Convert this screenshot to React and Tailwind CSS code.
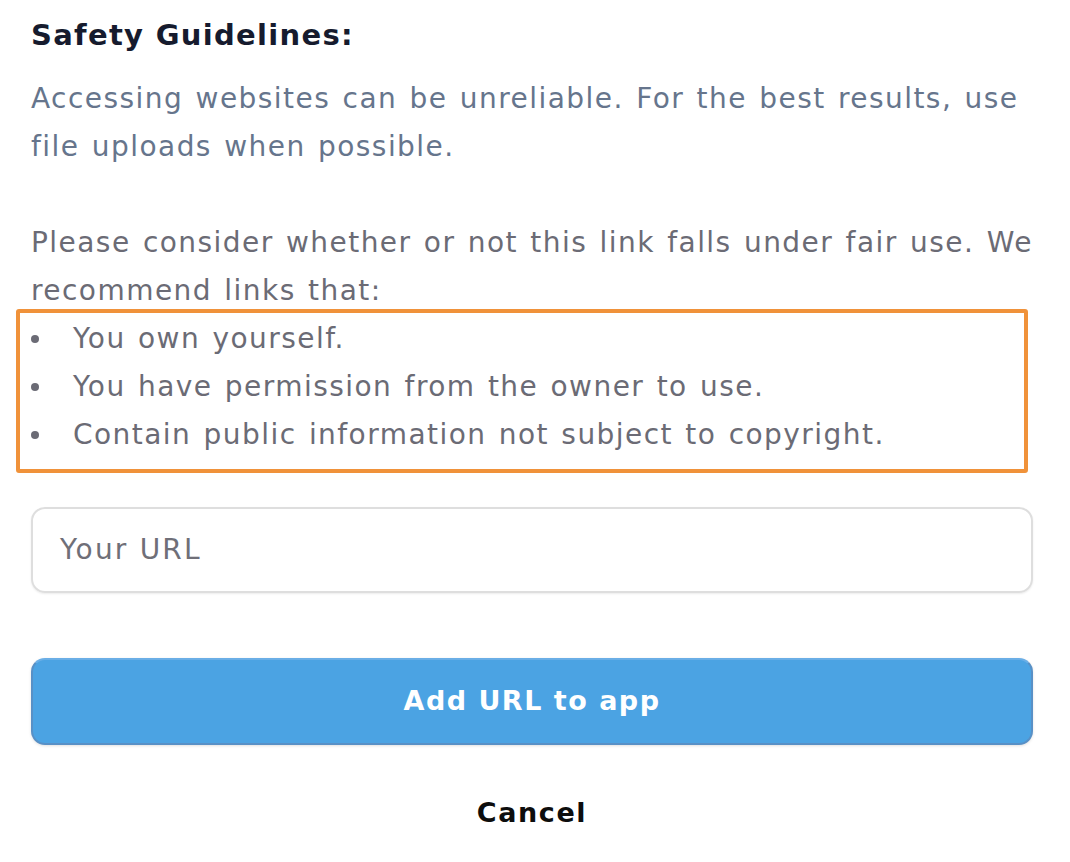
export default function App() {
  const font = { fontFamily: '"DejaVu Sans", "Open Sans", sans-serif' };
  const items = [
    "You own yourself.",
    "You have permission from the owner to use.",
    "Contain public information not subject to copyright.",
  ];
  return (
    <div className="w-[1070px] h-[862px] bg-white overflow-hidden" style={font}>
      <div className="w-[1002px] ml-[31px] pt-[11px]">
        <h2 className="text-[29px] leading-[48px] font-semibold tracking-[1.3px] text-[#161b2e]">Safety Guidelines:</h2>
        <div className="text-[28px] leading-[48px] tracking-[1.45px] [word-spacing:2px]">
          <p className="mt-[16px] text-[#66758c] whitespace-nowrap">
            Accessing websites can be unreliable. For the best results, use
            <br />
            file uploads when possible.
          </p>
          <p className="mt-[48px] text-[#6b6b75] whitespace-nowrap">
            Please consider whether or not this link falls under fair use. We
            <br />
            recommend links that:
          </p>
          <div className="relative">
            <ul className="text-[#6b6b75]">
              {items.map((t) => (
                <li key={t} className="flex items-center whitespace-nowrap">
                  <span className="w-[42px] flex items-center">
                    <span className="w-[8px] h-[8px] rounded-full bg-[#6b6b75]" />
                  </span>
                  <span>{t}</span>
                </li>
              ))}
            </ul>
            <div className="absolute left-[-15px] top-[-6px] w-[1012px] h-[164px] border-[4px] border-[#f0923a] rounded-[3px] pointer-events-none" />
          </div>
        </div>
        <div className="mt-[48px] h-[86px] rounded-[14px] border-2 border-[#dedede] shadow-[0_1px_2px_rgba(0,0,0,0.08)] flex items-center pl-[27px] text-[28px] tracking-[2.2px] text-[#6f6f78]">
          Your URL
        </div>
        <button className="mt-[65px] w-full h-[87px] rounded-[14px] bg-[#4ba3e3] border-2 border-[#5890c6] border-t-[#6aaee6] shadow-[0_1px_3px_rgba(0,0,0,0.12)] text-white text-[27px] tracking-[1.5px] font-bold flex items-center justify-center">
          Add URL to app
        </button>
        <div className="mt-[44px] text-center text-[27px] tracking-[1.6px] font-bold text-[#0d0d0d] leading-[48px]">
          Cancel
        </div>
      </div>
    </div>
  );
}
